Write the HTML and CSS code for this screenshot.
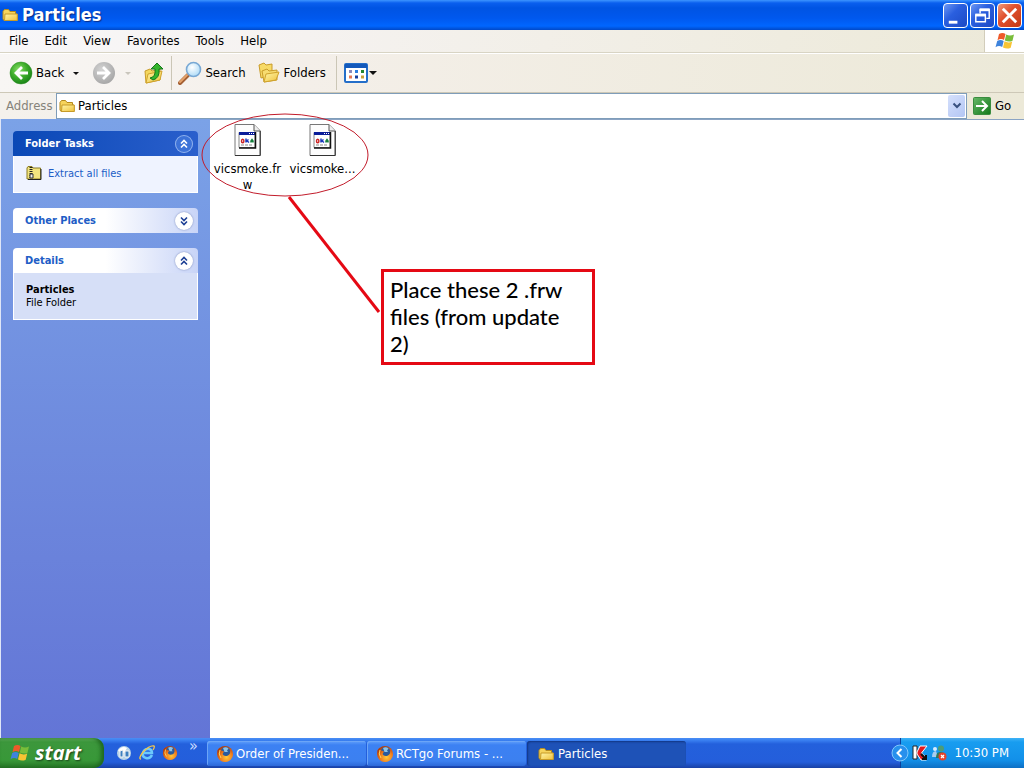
FILE: index.html
```html
<!DOCTYPE html>
<html lang="en">
<head>
<meta charset="utf-8">
<title>Particles</title>
<link rel="stylesheet" href="styles.css">
</head>
<body>
<svg class="defs" aria-hidden="true">
  <defs>
    <linearGradient id="gold" x1="0" y1="0" x2="1" y2="1"><stop offset="0" stop-color="#fff6a8"/><stop offset="1" stop-color="#efc13c"/></linearGradient>
    <radialGradient id="green" cx=".4" cy=".35" r=".7"><stop offset="0" stop-color="#8be06a"/><stop offset=".5" stop-color="#3fae2c"/><stop offset="1" stop-color="#158015"/></radialGradient>
    <radialGradient id="gray" cx=".4" cy=".35" r=".7"><stop offset="0" stop-color="#d4d4d4"/><stop offset="1" stop-color="#a5a5a5"/></radialGradient>
    <radialGradient id="lens" cx=".4" cy=".35" r=".7"><stop offset="0" stop-color="#fff"/><stop offset="1" stop-color="#a9d9f7"/></radialGradient>
    <linearGradient id="go" x1="0" y1="0" x2="1" y2="1"><stop offset="0" stop-color="#67b867"/><stop offset="1" stop-color="#11781a"/></linearGradient>
    <radialGradient id="fox" cx=".6" cy=".7" r=".7"><stop offset="0" stop-color="#ffc93a"/><stop offset=".6" stop-color="#f07a1c"/><stop offset="1" stop-color="#b33d0c"/></radialGradient>
    <symbol id="folder" viewBox="0 0 16 16"><path d="M1 4.500 2.500 2.500h4L8 4.500h5.500V7H15v6.500H2L1 12Z" fill="#f6d45c" stroke="#b58a1c"/><path d="M3 7h12.300v6.500H2.500Z" fill="url(#gold)" stroke="#c79b28"/></symbol>
    <symbol id="flag" viewBox="0 0 20 18"><path d="M4 2Q7.500 0 10.500 2L9 8Q6 6 2.500 8.200Z" fill="#ee5a2a"/><path d="M11.200 2.500Q15 4.500 19 2.500L17.500 8.700Q14 10.500 9.800 8.500Z" fill="#79bd3a"/><path d="M2.200 9Q5.500 7 8.700 9L7.200 15Q4 13 .5 15.200Z" fill="#3e83dc"/><path d="M9.500 9.300Q13.500 11.500 17.200 9.500L15.700 15.700Q12 17.500 8 15.500Z" fill="#f8c433"/></symbol>
    <symbol id="firefox" viewBox="0 0 18 18"><circle cx="9" cy="9" r="8" fill="url(#fox)"/><circle cx="9.500" cy="7" r="5" fill="#2b5b9d"/><path d="M7 3Q10 1.500 12.500 3.500L11 5.500 12 7 8.500 7Z" fill="#8cc4e8"/><path d="M1.500 5 4 2.500 4.500 5 8 6.500 6.500 9Q8 12 12 10.500 15 9 14 4.500 17 7 16.500 11 14 17 8 16.500 1 15 1.500 5Z" fill="url(#fox)"/><path d="M4 5Q2 9 5 13" fill="none" stroke="#ffd65a"/></symbol>
    <symbol id="frw" viewBox="0 0 27 32"><path d="M1 .5H20L26 6.500V31.500H1Z" fill="#fdfdfd" stroke="#777"/><path d="M20 .5V7h6" fill="#eee" stroke="#555"/><path d="M26.300 7V31.500H1" fill="none" stroke="#333"/><path d="M5 8.500h16v15H5Z" fill="#fff" stroke="#888"/><path d="M5 8h16v3H5Z" fill="#0a1d99"/><path d="M15 9.500h1m1 0h1m1 0h1" stroke="#fff"/><path d="M21.500 8v16H5" fill="none" stroke="#111" stroke-width="1.500"/><g fill="none" stroke-width="1.500"><ellipse cx="8.700" cy="17" rx="1.200" ry="1.800" stroke="#cc2525"/><path d="M12 14.500v4m0-1 2.500-2m-2 1 2.500 2" stroke="#1936bd"/><path d="M17 18.500v-1.500l1-1.500 1 1.500v1.500m-2-1h2" stroke="#15803e"/></g><path d="M7 21h12" stroke="#888" stroke-dasharray="3 1"/></symbol>
    <symbol id="chev" viewBox="0 0 18 18"><path d="m6 8.500 3-3 3 3m-6 4 3-3 3 3" fill="none" stroke="currentColor" stroke-width="1.600"/></symbol>
  </defs>
</svg>

<header class="titlebar">
  <svg class="icon16"><use href="#folder"/></svg>
  <h1 class="title">Particles</h1>
  <div class="winbuttons">
    <button class="winbtn" aria-label="Minimize"><svg viewBox="0 0 24 24"><path d="M5 19h9" stroke="#fff" stroke-width="3"/></svg></button>
    <button class="winbtn" aria-label="Restore"><svg viewBox="0 0 24 24"><path d="M9.500 10V6H19v9h-3" fill="none" stroke="#fff" stroke-width="1.500"/><path d="M9 6h10.500" stroke="#fff" stroke-width="3"/><path d="M5 11.500h10v7H5Z" fill="none" stroke="#fff" stroke-width="1.500"/><path d="M4.500 11.500h11" stroke="#fff" stroke-width="3"/></svg></button>
    <button class="winbtn close" aria-label="Close"><svg viewBox="0 0 24 24"><path d="m5 5 14 14M19 5 5 19" stroke="#fff" stroke-width="3"/></svg></button>
  </div>
</header>

<nav class="menubar" aria-label="Menu">
  <button class="menu">File</button><button class="menu">Edit</button><button class="menu">View</button><button class="menu">Favorites</button><button class="menu">Tools</button><button class="menu">Help</button>
  <span class="brand"><svg class="flag"><use href="#flag"/></svg></span>
</nav>

<div class="toolbar" role="toolbar">
  <button class="tool back"><svg class="icon24" viewBox="0 0 24 24"><circle cx="12" cy="12" r="11" fill="url(#green)" stroke="#2a8a20" stroke-width=".5"/><path d="M19 12H7m6-6-6 6 6 6" fill="none" stroke="#fff" stroke-width="2.800"/></svg>Back<i class="arrow"></i></button>
  <button class="tool forward" aria-label="Forward"><svg class="icon24" viewBox="0 0 24 24"><circle cx="12" cy="12" r="11" fill="url(#gray)"/><path d="M5 12h12m-6-6 6 6-6 6" fill="none" stroke="#fff" stroke-width="2.800"/></svg><i class="arrow pale"></i></button>
  <button class="tool up" aria-label="Up"><svg class="icon22" viewBox="0 0 22 22"><path d="m2 9 5-2 2 2 8-2v11L3 21Z" fill="#f4d75e" stroke="#c99c2a"/><path d="m5 12 14-3-2 9-14 3Z" fill="url(#gold)" stroke="#d0a32c"/><path d="M7 16q6-1 5-9H8l6-6 6 6h-4q1 9-6 11Z" fill="#35b52c" stroke="#15761a"/></svg></button>
  <span class="rule"></span>
  <button class="tool search"><svg class="icon24" viewBox="0 0 24 24"><path d="M10 14 2 22" stroke="#a35e32" stroke-width="4" stroke-linecap="round"/><path d="M9 14 2 21" stroke="#e5a36c" stroke-width="2" stroke-linecap="round"/><circle cx="15.500" cy="8.500" r="7" fill="url(#lens)" stroke="#78a8d4" stroke-width="1.600"/></svg>Search</button>
  <button class="tool folders"><svg class="icon22" viewBox="0 0 22 22"><path d="M1 3 6 1l2 2 6-1v11L3 16Z" fill="#f7da66" stroke="#c99c2a"/><path d="m4 9 5-2 2 2 8-1v10L6 20Z" fill="#f7dc70" stroke="#c99c2a"/><path d="m8 12 13-2-3 8-12 2Z" fill="url(#gold)" stroke="#d0a32c"/></svg>Folders</button>
  <span class="rule"></span>
  <button class="tool views" aria-label="Views"><svg class="icon24" viewBox="0 0 24 20"><rect x="1" y="1" width="22" height="18" rx="1" fill="#fff" stroke="#246ec9" stroke-width="2"/><path d="M1 3h22" stroke="#1459bb" stroke-width="4"/><g stroke-width="3"><path d="M5 8.500h3" stroke="#8b89b9"/><path d="M11 8.500h3" stroke="#2d7fe0"/><path d="M17 8.500h3" stroke="#23852e"/><path d="M5 14h3" stroke="#e67753"/><path d="M11 14h3" stroke="#183f9b"/><path d="M17 14h3" stroke="#caa03a"/></g></svg><i class="arrow"></i></button>
</div>

<form class="address">
  <label class="addresslabel" for="path">Address</label>
  <div class="pathbox"><svg class="icon16"><use href="#folder"/></svg><input class="path" id="path" type="text" value="Particles"><button class="drop" type="button" aria-label="Show addresses"><svg viewBox="0 0 10 8"><path d="m1.500 1.500 3.500 3.500 3.500-3.500" fill="none" stroke="#38507f" stroke-width="2"/></svg></button></div>
  <button class="go" type="button"><svg class="icon18" viewBox="0 0 18 18"><rect x=".5" y=".5" width="17" height="17" rx="1" fill="url(#go)" stroke="#3a8c3f"/><path d="M3 9h11M9 4l5 5-5 5" fill="none" stroke="#fff" stroke-width="2"/></svg>Go</button>
</form>

<main class="content">
  <aside class="side">
    <section class="panel primary">
      <h2 class="panelhead">Folder Tasks<button class="fold" aria-label="Collapse Folder Tasks"><svg><use href="#chev"/></svg></button></h2>
      <div class="panelbody tasks"><a class="task" href="#extract"><svg class="icon16" viewBox="0 0 16 16"><path d="M1 3 2 1.500h4L7 3h7.500v11H1Z" fill="#f2e47e" stroke="#8a7a20"/><path d="M2 14.500h13V4" fill="none" stroke="#222"/><path d="M5 2v11" stroke="#222" stroke-width="3" stroke-dasharray="1 1"/><path d="M4 9h3v4H4Z" fill="#eee" stroke="#333"/></svg>Extract all files</a></div>
    </section>
    <section class="panel">
      <h2 class="panelhead">Other Places<button class="fold down" aria-label="Expand Other Places"><svg><use href="#chev"/></svg></button></h2>
    </section>
    <section class="panel">
      <h2 class="panelhead">Details<button class="fold" aria-label="Collapse Details"><svg><use href="#chev"/></svg></button></h2>
      <div class="panelbody details"><strong>Particles</strong><span>File Folder</span></div>
    </section>
  </aside>
  <section class="files" aria-label="Files">
    <div class="file"><svg class="fileicon"><use href="#frw"/></svg><span>vicsmoke.fr<br>w</span></div>
    <div class="file"><svg class="fileicon"><use href="#frw"/></svg><span>vicsmoke...</span></div>
    <svg class="marks" aria-hidden="true"><ellipse cx="83" cy="42" rx="83" ry="41" fill="none" stroke="#c21c2b"/><path d="m87 84 90 115" stroke="#e50914" stroke-width="3"/></svg>
    <p class="callout">Place these 2 .frw files (from update 2)</p>
  </section>
</main>

<footer class="taskbar">
  <button class="start"><svg class="flag"><use href="#flag"/></svg>start</button>
  <div class="quick">
    <button class="launch" aria-label="Media"><svg viewBox="0 0 16 16"><circle cx="8" cy="8" r="7" fill="#b9d4e8"/><path d="M2 6q4-6 9-3L8 8Z" fill="#fff"/><path d="M4 12V6l3-1v7Zm5-6h4v6H9Z" fill="#3c7fc0" stroke="#f4f4f4"/></svg></button>
    <button class="launch" aria-label="Internet Explorer"><svg viewBox="0 0 16 16"><path d="M13 10Q11 14 7 13 3 12 4 8 5 4 9 4q4 0 4 4H5" fill="none" stroke="#6ccafc" stroke-width="2.500"/><path d="M2 14Q-1 14 4 7 11 0 15 1q1 1-1 4" fill="none" stroke="#f2c64c" stroke-width="1.300"/></svg></button>
    <button class="launch" aria-label="Firefox"><svg><use href="#firefox"/></svg></button>
    <button class="more" aria-label="More">»</button>
  </div>
  <div class="windows">
    <button class="win"><svg class="icon18"><use href="#firefox"/></svg>Order of Presiden...</button>
    <button class="win"><svg class="icon18"><use href="#firefox"/></svg>RCTgo Forums - ...</button>
    <button class="win active"><svg class="icon16"><use href="#folder"/></svg>Particles</button>
  </div>
  <div class="tray">
    <button class="expand" aria-label="Show hidden icons"><svg viewBox="0 0 18 18"><circle cx="9" cy="9" r="8" fill="#2790ed" stroke="#83c8fb"/><path d="m10.500 5-4 4 4 4" fill="none" stroke="#fff" stroke-width="2"/></svg></button>
    <svg class="icon16" viewBox="0 0 16 16"><path d="M1 1h4v13H1Z" fill="#fff" stroke="#222"/><path d="M5 7 8 1h7L9.500 8l5 5v2H9L5 9Z" fill="#e31920" stroke="#fff"/><path d="m9 9 5 5m0-4v4h-4" fill="none" stroke="#111" stroke-width="2"/></svg>
    <svg class="icon16" viewBox="0 0 16 16"><circle cx="4" cy="4" r="2" fill="#d8ecff"/><path d="M1 12q0-6 4-6l2 6Z" fill="#a9cdef"/><circle cx="10" cy="3.500" r="3" fill="#4c9c77"/><path d="M5 13q0-7 5-6 5 0 5 6Z" fill="#2d7b5e"/><circle cx="11.500" cy="11.500" r="4" fill="#e5432c"/><path d="m10 10 3 3m0-3-3 3" stroke="#fff" stroke-width="1.300"/></svg>
    <time class="clock">10:30 PM</time>
  </div>
</footer>
</body>
</html>
```
FILE: styles.css
```css
* { box-sizing: border-box; }
body {
  margin: 0;
  min-height: 100vh;
  display: flex;
  flex-direction: column;
  background: #fff;
  color: #000;
  font: 13px/16px "DejaVu Sans Condensed", "DejaVu Sans", sans-serif;
}
button, input { font: inherit; color: inherit; border: 0; padding: 0; background: none; }
svg { display: block; flex: none; }
.defs { position: absolute; width: 0; height: 0; }
.icon16 { width: 16px; height: 16px; }
.icon18 { width: 18px; height: 18px; }
.icon22 { width: 22px; height: 22px; }
.icon24 { width: 24px; height: 24px; }
.flag { width: 20px; height: 18px; }

.titlebar {
  display: flex;
  align-items: center;
  height: 30px;
  padding: 0 2px;
  gap: 4px;
  background: linear-gradient(#3d95ff 0, #0a5fee 3px, #0054e3 8px, #0058ee 18px, #0066ff 26px, #0048c8 30px);
}
.title { margin: 0; flex: 1; color: #fff; font-size: 18px; line-height: 24px; text-shadow: 1px 1px 1px #0a2d86; }
.winbuttons { display: flex; gap: 2px; }
.winbtn {
  width: 25px;
  height: 25px;
  border: 1px solid #fff;
  border-radius: 4px;
  background: linear-gradient(135deg, #6d98f4, #2a5fdf 40%, #1c49c4);
}
.winbtn svg { width: 100%; height: 100%; }
.close { background: linear-gradient(135deg, #f09a7c, #e0512f 40%, #c43812); }

.menubar {
  display: flex;
  align-items: center;
  height: 23px;
  padding-left: 9px;
  gap: 16px;
  background: linear-gradient(90deg, #f8f7f8, #f5f2f0 30%, #ece9d8);
  border-bottom: 1px solid #d8d4c4;
}
.brand {
  display: flex;
  align-items: center;
  justify-content: center;
  align-self: stretch;
  width: 40px;
  margin-left: auto;
  background: #fff;
  border-left: 1px solid #d2cdbb;
}

.toolbar {
  display: flex;
  align-items: center;
  height: 40px;
  padding-left: 9px;
  background: linear-gradient(90deg, #f8f6f4, #f4efe9 30%, #ece9d8);
  border-top: 1px solid #fff;
  border-bottom: 1px solid #cdc8b7;
}
.tool { display: flex; align-items: center; gap: 3px; }
.arrow { border: 4px solid transparent; border-top-color: #111; border-bottom: 0; }
.pale { border-top-color: #c9c6bc; }
.back { margin-right: 13px; }
.back .arrow { margin-left: 6px; border-width: 3px 3px 0; }
.forward { gap: 9px; margin-right: 12px; }
.forward .arrow { border-width: 3px 3px 0; }
.up { margin-right: 6px; }
.rule { width: 1px; height: 34px; background: #cbc6b6; }
.search { margin: 0 12px 0 6px; }
.folders { margin-right: 10px; gap: 4px; }
.views { margin-left: 7px; gap: 1px; }

.address {
  display: flex;
  align-items: center;
  height: 26px;
  padding-left: 6px;
  background: linear-gradient(90deg, #f4f1ec, #ece9d8);
}
.addresslabel { width: 50px; color: #85837a; }
.pathbox {
  display: flex;
  flex: 1;
  align-items: center;
  align-self: stretch;
  gap: 3px;
  padding: 1px 1px 1px 2px;
  background: #fff;
  border: 1px solid #7f9db9;
}
.path { flex: 1; min-width: 0; outline: 0; }
.drop {
  display: flex;
  align-items: center;
  justify-content: center;
  align-self: stretch;
  width: 17px;
  border-radius: 2px;
  background: linear-gradient(135deg, #d5e0fc, #b3c6f4);
}
.drop svg { width: 10px; height: 8px; }
.go { display: flex; align-items: center; width: 57px; gap: 4px; padding-left: 6px; }

.content { display: flex; flex: 1; }
.side {
  display: flex;
  flex-direction: column;
  gap: 15px;
  width: 210px;
  padding: 12px;
  border-left: 1px solid #dfe6f7;
  background: linear-gradient(#7ba2e7, #6375d6);
  font-size: 11px;
  line-height: 13px;
}
.panelhead {
  display: flex;
  align-items: center;
  justify-content: space-between;
  height: 25px;
  margin: 0;
  padding: 0 5px 0 12px;
  border-radius: 4px 4px 0 0;
  background: linear-gradient(90deg, #fff 50%, #c8d4f7);
  color: #215dc6;
  font-size: 11px;
}
.primary .panelhead { background: linear-gradient(90deg, #0a48b6, #2a5fcc); color: #fff; }
.fold {
  width: 18px;
  height: 18px;
  border-radius: 9px;
  background: #fff;
  color: #1d3f94;
  box-shadow: 0 0 2px #7586b8;
}
.fold svg { width: 18px; height: 18px; }
.primary .fold { background: #3c72d8; color: #fff; box-shadow: inset 0 0 0 1px #8fb0ec; }
.down svg { transform: rotate(180deg); }
.panelbody { border: 1px solid #fff; border-top: 0; background: #d6dff7; }
.tasks { padding: 9px 12px 11px; background: #eff3ff; }
.task { display: flex; align-items: center; gap: 6px; color: #215dc6; text-decoration: none; }
.details { display: flex; flex-direction: column; padding: 10px 12px; }

.files {
  position: relative;
  display: flex;
  flex: 1;
  align-items: flex-start;
  border-top: 1px solid #8ba4c4;
  padding: 4px 0;
}
.file { display: flex; flex-direction: column; align-items: center; width: 75px; gap: 5px; text-align: center; }
.fileicon { width: 27px; height: 32px; }
.marks { position: absolute; left: -8px; top: -7px; width: 180px; height: 202px; overflow: visible; }
.callout {
  position: absolute;
  left: 171px;
  top: 149px;
  width: 214px;
  margin: 0;
  padding: 4px 24px 5px 6px;
  border: 3px solid #e50914;
  background: #fff;
  font: 500 22px/27px Lato, sans-serif;
}

.taskbar {
  display: flex;
  height: 30px;
  background: linear-gradient(#4b8df4 0, #3b82f2 2px, #2360dc 6px, #245edb 24px, #1941a5 30px);
  color: #fff;
}
.start {
  display: flex;
  align-items: center;
  width: 104px;
  gap: 5px;
  padding-left: 10px;
  border-radius: 0 10px 10px 0;
  background: linear-gradient(#69b565 0, #3c973c 4px, #389838 22px, #267526 30px);
  box-shadow: inset -3px 0 4px #1e661e;
  font: italic bold 20px/24px "Open Sans", sans-serif;
  text-shadow: 1px 1px 2px #173e17;
}
.quick { display: flex; align-items: center; width: 103px; gap: 7px; padding-left: 12px; }
.launch, .launch svg { width: 16px; height: 16px; }
.more { align-self: flex-start; font-size: 16px; color: #c8dcff; padding-left: 4px; }
.windows { display: flex; flex: 1; gap: 1px; padding: 3px 0 2px; }
.win {
  display: flex;
  align-items: center;
  width: 159px;
  gap: 2px;
  padding-left: 9px;
  border-radius: 3px;
  background: linear-gradient(#62a0fb 0, #3c81f3 4px, #3c80f0 20px, #2d69d8 25px);
  box-shadow: inset 1px 1px 0 #6ba5f7;
}
.active { gap: 4px; padding-left: 11px; background: #1e52b7; box-shadow: inset 1px 1px 2px #123582; }
.tray {
  display: flex;
  align-items: center;
  gap: 3px;
  padding-right: 15px;
  border-left: 1px solid #0b3f9b;
  background: linear-gradient(#3eb2f6 0, #189df0 4px, #1290e9 22px, #0d6fc4 30px);
}
.expand { margin-left: -10px; }
.expand svg { width: 18px; height: 18px; }
.clock { margin-left: 4px; }
```
